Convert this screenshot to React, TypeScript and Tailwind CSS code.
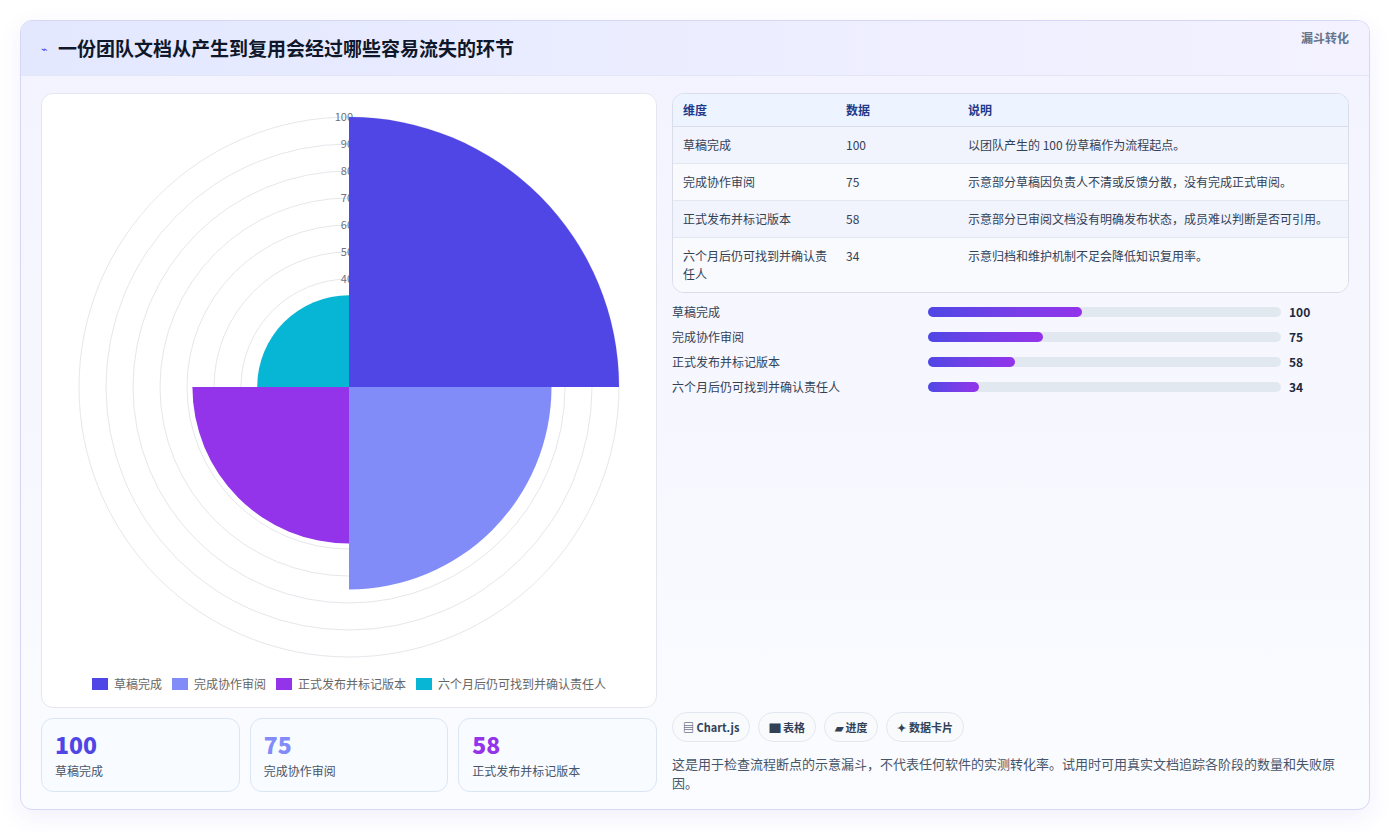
import React from "react"

const font = { fontFamily: '"Noto Sans CJK SC", "Noto Sans", sans-serif' }

const rows = [
  { name: "草稿完成", value: 100, note: "以团队产生的 100 份草稿作为流程起点。", bar: 43.5, color: "#4f46e5" },
  { name: "完成协作审阅", value: 75, note: "示意部分草稿因负责人不清或反馈分散，没有完成正式审阅。", bar: 32.5, color: "#818cf8" },
  { name: "正式发布并标记版本", value: 58, note: "示意部分已审阅文档没有明确发布状态，成员难以判断是否可引用。", bar: 24.7, color: "#9333ea" },
  { name: "六个月后仍可找到并确认责任人", value: 34, note: "示意归档和维护机制不足会降低知识复用率。", bar: 14.5, color: "#06b6d4" },
]

function PolarChart() {
  const cx = 307
  const cy = 290
  const k = 2.7
  const rings = [10, 20, 30, 40, 50, 60, 70, 80, 90, 100]
  const seg = (i: number, v: number) => {
    const r = v * k
    const pts = [
      [cx, cy - r],
      [cx + r, cy],
      [cx, cy + r],
      [cx - r, cy],
    ]
    const a = pts[i]
    const b = pts[(i + 1) % 4]
    return `M${cx} ${cy} L${a[0]} ${a[1]} A${r} ${r} 0 0 1 ${b[0]} ${b[1]} Z`
  }
  return (
    <svg width="615" height="575" className="block">
      {rings.map((v) => (
        <circle key={v} cx={cx} cy={cy} r={v * k} fill="none" stroke="#e5e7eb" strokeWidth="1" />
      ))}
      {rings.slice(3).map((v) => (
        <text key={v} x={cx + 4} y={cy - v * k + 4} textAnchor="end" fontSize="11" fill="#6b7280" style={font}>
          {v}
        </text>
      ))}
      {rows.map((r, i) => (
        <path key={r.name} d={seg(i, r.value)} fill={r.color} />
      ))}
    </svg>
  )
}

export default function App() {
  return (
    <div className="min-h-screen bg-white p-5 pb-[22px]" style={font}>
      <div className="rounded-xl border border-[#d4d8f5] bg-gradient-to-b from-[#f2f3fe] to-[#fbfcff] shadow-[0_8px_24px_rgba(79,70,229,0.08)] overflow-hidden">
        <div className="flex h-[55px] items-center justify-between border-b border-[#e3e6f7] bg-gradient-to-r from-[#e3e8ff] to-[#f4f2ff] px-5">
          <div className="flex items-center gap-2.5">
            <span className="text-[11px] text-[#4f46e5]">⌁</span>
            <h1 className="text-[19px] font-bold text-[#0f172a]">一份团队文档从产生到复用会经过哪些容易流失的环节</h1>
          </div>
          <span className="-mt-2 self-start pt-4 text-[12px] font-semibold text-[#64748b]">漏斗转化</span>
        </div>
        <div className="flex gap-[15px] px-5 pt-[17px] pb-[17px]">
          <div className="flex w-[616px] flex-col gap-[10px]">
            <div className="flex h-[615px] flex-col items-center rounded-xl border border-[#e5e7f0] bg-white pt-[3px]">
              <PolarChart />
              <div className="mt-[3px] flex items-center gap-2.5 text-[12px] text-[#666]">
                {rows.map((r) => (
                  <div key={r.name} className="flex items-center gap-1.5">
                    <span className="h-3 w-4" style={{ background: r.color }} />
                    {r.name}
                  </div>
                ))}
              </div>
            </div>
            <div className="grid grid-cols-3 gap-[10px]">
              {rows.slice(0, 3).map((r) => (
                <div key={r.name} className="h-[74px] rounded-xl border border-[#dbe6f3] bg-[#f8fbff] px-[13px] pt-[11px]">
                  <div className="text-[23px] font-extrabold leading-7" style={{ color: r.color }}>
                    {r.value}
                  </div>
                  <div className="mt-1 text-[12px] text-[#475569]">{r.name}</div>
                </div>
              ))}
            </div>
          </div>
          <div className="flex flex-1 flex-col">
            <div className="overflow-hidden rounded-xl border border-[#d8dde9] text-[12px] text-[#334155]">
              <div className="flex h-[33px] items-center border-b border-[#d8dde9] bg-[#eef4ff] px-[10px] font-semibold text-[#1e3a8a]">
                <div className="w-[163px]">维度</div>
                <div className="w-[122px]">数据</div>
                <div>说明</div>
              </div>
              {rows.map((r, i) => (
                <div
                  key={r.name}
                  className={`flex border-b border-[#e3e8f0] px-[10px] py-[9px] last:border-b-0 ${i % 2 === 0 ? "bg-[#f1f3fd]" : "bg-[#f8fafd]"}`}
                >
                  <div className="w-[163px] pr-2 leading-[18px]">{r.name}</div>
                  <div className="w-[122px] leading-[18px]">{r.value}</div>
                  <div className="flex-1 leading-[18px]">{r.note}</div>
                </div>
              ))}
            </div>
            <div className="mt-[10px] flex flex-col gap-[7px] text-[12px] text-[#334155]">
              {rows.map((r) => (
                <div key={r.name} className="flex h-[18px] items-center">
                  <div className="w-[256px]">{r.name}</div>
                  <div className="h-[10px] w-[353px] rounded-full bg-[#e2e8f0]">
                    <div className="h-full rounded-full bg-gradient-to-r from-[#4f46e5] to-[#9333ea]" style={{ width: `${r.bar}%` }} />
                  </div>
                  <div className="ml-2 font-bold text-[#1e293b]">{r.value}</div>
                </div>
              ))}
            </div>
            <div className="flex-1" />
            <div className="flex gap-2 text-[11px] font-semibold text-[#334155]">
              {["▤ Chart.js", "▇ 表格", "▰ 进度", "✦ 数据卡片"].map((t) => (
                <span key={t} className="rounded-full border border-[#e2e8f0] bg-[#f8fafc] px-2.5 py-[6px]">
                  {t}
                </span>
              ))}
            </div>
            <p className="mt-3 text-[13px] leading-[19px] text-[#475569]">
              这是用于检查流程断点的示意漏斗，不代表任何软件的实测转化率。试用时可用真实文档追踪各阶段的数量和失败原因。
            </p>
          </div>
        </div>
      </div>
    </div>
  )
}
